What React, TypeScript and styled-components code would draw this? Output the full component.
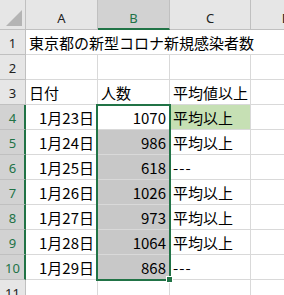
import React from "react";
import styled, { createGlobalStyle, css } from "styled-components";

const GREEN = "#217346";
const GRID = "#d9d9d9";
const HEAD_BG = "#e6e6e6";
const HEAD_SEL_BG = "#d2d2d2";
const HEAD_LINE = "#c0c0c0";

const GlobalStyle = createGlobalStyle`
  html, body { margin: 0; padding: 0; background: #fff; }
  body { overflow: hidden; }
`;

const Sheet = styled.div`
  position: relative;
  display: grid;
  grid-template-columns: 26px 72px 72px 81px 72px;
  grid-template-rows: 30px;
  grid-auto-rows: 25px;
  width: 284px;
  height: 295px;
  overflow: hidden;
  background: #fff;
  font-family: "Noto Sans CJK JP", "Noto Sans", sans-serif;
`;

const Corner = styled.div`
  position: relative;
  background: ${HEAD_BG};
  border-right: 1px solid ${HEAD_LINE};
  border-bottom: 1px solid ${HEAD_LINE};
  &::after {
    content: "";
    position: absolute;
    right: 3px;
    bottom: 3px;
    width: 16px;
    height: 16px;
    background: #b4b4b4;
    clip-path: polygon(100% 0, 100% 100%, 0 100%);
  }
`;

const ColHead = styled.div<{ $selected?: boolean }>`
  display: flex;
  align-items: center;
  justify-content: center;
  padding-top: 7px;
  box-sizing: border-box;
  background: ${HEAD_BG};
  border-right: 1px solid ${HEAD_LINE};
  border-bottom: 1px solid ${HEAD_LINE};
  font-family: "Noto Sans", sans-serif;
  font-size: 13px;
  color: #222;
  ${(p) =>
    p.$selected &&
    css`
      background: ${HEAD_SEL_BG};
      color: ${GREEN};
      border-bottom: 2px solid ${GREEN};
      padding-top: 8px;
    `}
`;

const RowHead = styled.div<{ $selected?: boolean }>`
  display: flex;
  align-items: center;
  justify-content: center;
  padding-top: 2px;
  box-sizing: border-box;
  background: ${HEAD_BG};
  border-right: 1px solid ${HEAD_LINE};
  border-bottom: 1px solid ${HEAD_LINE};
  font-family: "Noto Sans", sans-serif;
  font-size: 13px;
  color: #222;
  ${(p) =>
    p.$selected &&
    css`
      background: ${HEAD_SEL_BG};
      color: ${GREEN};
      border-right: 2px solid ${GREEN};
      padding-left: 1px;
    `}
`;

type Fill = "none" | "selected" | "good";

const Cell = styled.div<{ $align?: "left" | "right"; $fill?: Fill }>`
  display: flex;
  align-items: center;
  justify-content: ${(p) => (p.$align === "right" ? "flex-end" : "flex-start")};
  padding: 1px 3px 0 3px;
  box-sizing: border-box;
  border-right: 1px solid ${GRID};
  border-bottom: 1px solid ${GRID};
  font-size: 15px;
  color: #000;
  white-space: nowrap;
  background: ${(p) =>
    p.$fill === "selected" ? "#c8c8c8" : p.$fill === "good" ? "#c6e0b4" : "#fff"};
`;

const TitleCell = styled(Cell)`
  grid-column: 2 / -1;
  border-right: none;
`;

const Dashes = styled.span`
  letter-spacing: 1px;
`;

const Selection = styled.div`
  position: absolute;
  left: 96px;
  top: 104px;
  width: 75px;
  height: 177px;
  box-sizing: border-box;
  border: 2px solid ${GREEN};
  pointer-events: none;
`;

const FillHandle = styled.div`
  position: absolute;
  left: 166px;
  top: 276px;
  width: 7px;
  height: 7px;
  box-sizing: border-box;
  background: ${GREEN};
  border: 1px solid #fff;
`;

const columns = ["A", "B", "C", "D"];

const data: { date: string; count: number; flag: string }[] = [
  { date: "1月23日", count: 1070, flag: "平均以上" },
  { date: "1月24日", count: 986, flag: "平均以上" },
  { date: "1月25日", count: 618, flag: "---" },
  { date: "1月26日", count: 1026, flag: "平均以上" },
  { date: "1月27日", count: 973, flag: "平均以上" },
  { date: "1月28日", count: 1064, flag: "平均以上" },
  { date: "1月29日", count: 868, flag: "---" },
];

export default function App() {
  return (
    <>
      <GlobalStyle />
      <Sheet>
        <Corner />
        {columns.map((c) => (
          <ColHead key={c} $selected={c === "B"}>
            {c}
          </ColHead>
        ))}

        <RowHead>1</RowHead>
        <TitleCell>東京都の新型コロナ新規感染者数</TitleCell>

        <RowHead>2</RowHead>
        <Cell />
        <Cell />
        <Cell />
        <Cell />

        <RowHead>3</RowHead>
        <Cell>日付</Cell>
        <Cell>人数</Cell>
        <Cell>平均値以上</Cell>
        <Cell />

        {data.map((d, i) => (
          <React.Fragment key={d.date}>
            <RowHead $selected>{i + 4}</RowHead>
            <Cell $align="right">{d.date}</Cell>
            <Cell $align="right" $fill={i === 0 ? "none" : "selected"}>
              {d.count}
            </Cell>
            <Cell $fill={i === 0 ? "good" : "none"}>
              {d.flag === "---" ? <Dashes>{d.flag}</Dashes> : d.flag}
            </Cell>
            <Cell />
          </React.Fragment>
        ))}

        <RowHead>11</RowHead>
        <Cell />
        <Cell />
        <Cell />
        <Cell />

        <Selection />
        <FillHandle />
      </Sheet>
    </>
  );
}
